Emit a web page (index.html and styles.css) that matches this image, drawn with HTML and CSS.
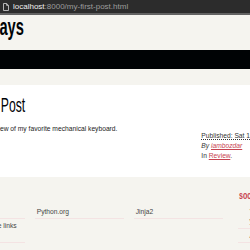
FILE: index.html
```html
<!DOCTYPE html>
<html lang="en">
<head>
<meta charset="utf-8">
<title>My First Post</title>
<link rel="stylesheet" href="styles.css">
</head>
<body>
<div class="chrome">
  <svg class="page-icon" width="6" height="8" viewBox="0 0 6 8"><path d="M0.5 0.5 H3.6 L5.5 2.4 V7.5 H0.5 Z M3.6 0.5 V2.4 H5.5" fill="none" stroke="#c4c4c4" stroke-width="0.9"/></svg>
  <span class="url"><span class="host">localhost</span>:8000/my-first-post.html</span>
</div>
<div class="page">
  <header class="banner">
    <h1 class="site-title"><a href="#">Tech Essays</a></h1>
  </header>
  <nav class="menu"><a href="#">Review</a></nav>
  <section class="content">
    <h1 class="entry-title">My First Post</h1>
    <div class="entry">
      <div class="entry-body">
        <p>This is a short review of my favorite mechanical keyboard.</p>
      </div>
      <footer class="post-info">
        <abbr class="published" title="2019-03-16">Published: Sat 16 March 2019</abbr>
        <address class="author">By <a href="#">iambozdar</a></address>
        <p>In <a href="#">Review</a>.</p>
      </footer>
    </div>
  </section>
  <section class="extras">
    <div class="blogroll">
      <h2>links</h2>
      <ul>
        <li><a href="#">Pelican</a></li>
        <li><a href="#">Python.org</a></li>
        <li><a href="#">Jinja2</a></li>
        <li><a href="#">You can modify those links in your config file</a></li>
      </ul>
    </div>
    <div class="social">
      <h2>social</h2>
      <ul>
        <li><a href="#">You can add links in your config file</a></li>
        <li><a href="#">Another social link</a></li>
      </ul>
    </div>
  </section>
</div>
</body>
</html>
```
FILE: styles.css
```css
html, body {
  margin: 0;
  padding: 0;
}
body {
  background: #f5f4ef;
  color: #000305;
  font-family: "Liberation Sans", Arial, sans-serif;
  overflow: hidden;
}
.chrome {
  height: 13px;
  background: #2c2c2c;
  border-bottom: 2px solid #626262;
  display: flex;
  align-items: center;
  gap: 4px;
  padding-left: 3px;
}
.page-icon {
  display: block;
}
.url {
  font-size: 8px;
  line-height: 13px;
  color: #9c9c9c;
  white-space: nowrap;
}
.url .host {
  color: #f0f0f0;
}
.page {
  width: 386px;
  margin-left: -64px;
}
.banner {
  height: 35px;
}
.site-title {
  margin: 0;
  font-size: 24px;
  line-height: 24px;
  font-weight: bold;
  white-space: nowrap;
}
.site-title a {
  display: inline-block;
  color: #000305;
  text-decoration: none;
  transform: scaleX(0.612);
  transform-origin: left center;
}
.menu {
  height: 19px;
  background: #000305;
  border-radius: 3px;
  margin-bottom: 16px;
  display: flex;
  align-items: center;
}
.menu a {
  color: #fff;
  font-size: 8px;
  text-decoration: none;
  padding: 0 10px;
}
.content {
  background: #fff;
  border-radius: 5px;
  padding: 10px 9.7px 16.3px;
}
.entry-title {
  margin: 0 0 8.7px 8px;
  font-size: 20px;
  line-height: 20px;
  font-weight: normal;
  white-space: nowrap;
  display: inline-block;
  transform: scaleX(0.61);
  transform-origin: left center;
}
.entry {
  display: flex;
  align-items: flex-start;
  font-size: 6.7px;
  line-height: 10px;
}
.entry-body {
  flex: 1;
  color: #222;
  white-space: nowrap;
}
.entry-body p {
  margin: 0;
}
.post-info {
  width: 111px;
  flex: none;
  margin-top: 7px;
  color: #333;
  white-space: nowrap;
}
.published {
  display: block;
  text-decoration: underline dotted;
}
.author {
  font-style: italic;
}
.post-info p {
  margin: 0;
}
.post-info a {
  color: #c74350;
  text-decoration: underline;
}
.extras {
  margin-top: 12px;
  display: flex;
  justify-content: space-between;
}
.extras h2 {
  margin: 0 0 3.7px;
  padding: 0 1.5px;
  font-size: 11.5px;
  line-height: 12px;
  font-weight: bold;
  color: #c74350;
  transform: scaleX(0.62);
  transform-origin: left center;
}
.extras ul {
  list-style: none;
  margin: 0;
  padding: 0;
}
.extras a {
  display: block;
  color: #444;
  text-decoration: none;
  font-size: 6.7px;
  line-height: 9.5px;
  padding: 2px 1.7px;
  border-bottom: 1px solid #f4e3e3;
}
.blogroll {
  width: 297px;
}
.blogroll ul {
  display: grid;
  grid-template-columns: repeat(3, 89.3px);
  column-gap: 9.7px;
  align-items: start;
}
.social {
  width: 84.5px;
}
.social a {
  padding-left: 12px;
}
```
